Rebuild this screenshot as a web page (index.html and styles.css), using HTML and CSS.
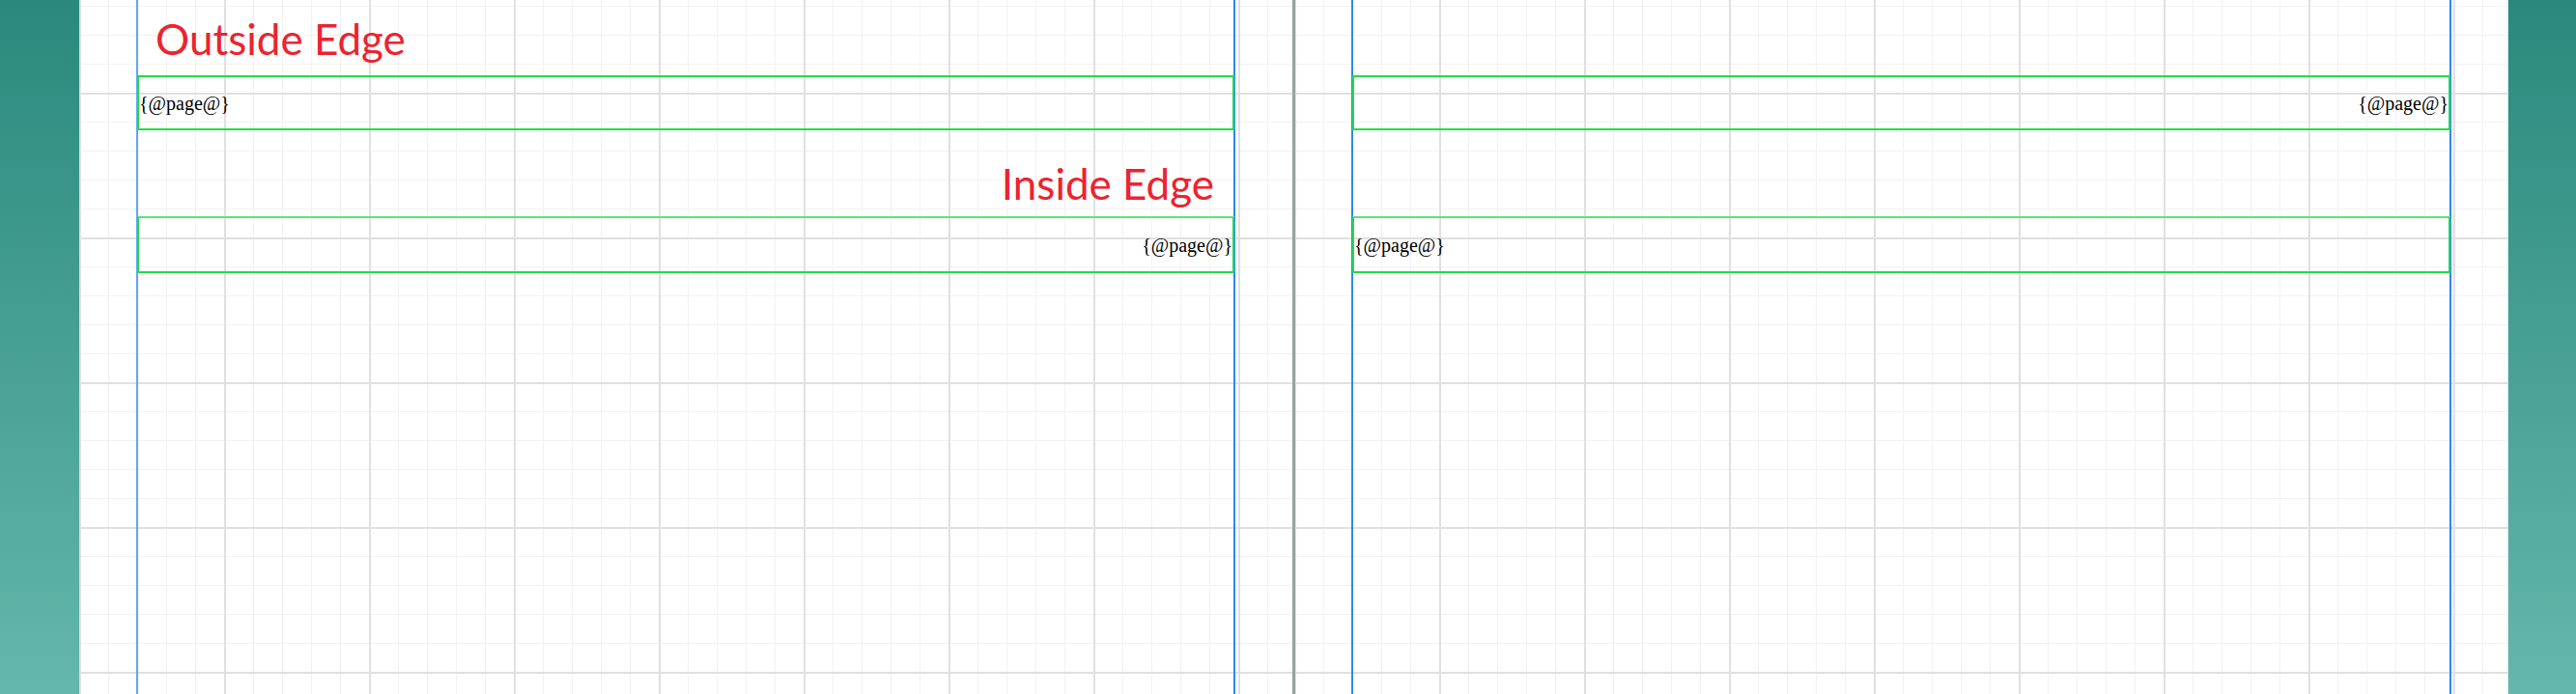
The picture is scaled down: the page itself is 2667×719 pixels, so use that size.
FILE: index.html
```html
<!DOCTYPE html>
<html lang="en">
<head>
  <meta charset="UTF-8" />
  <meta name="viewport" content="width=device-width, initial-scale=1.0"/>
  <title>Page Spread</title>
  <link rel="stylesheet" href="styles.css">
</head>
<body>
  <div class="workspace">
    <!-- left side band -->
    <div class="band band-left"></div>

    <!-- left page (even) -->
    <div class="page page-left">
      <div class="margins">
        <h1 class="label label-outside">Outside Edge</h1>
        <div class="frame frame-start"><span class="folio">{@page@}</span></div>
        <h1 class="label label-inside">Inside Edge</h1>
        <div class="frame frame-end frame-lower"><span class="folio">{@page@}</span></div>
      </div>
    </div>

    <div class="spine"></div>

    <!-- right page (odd) -->
    <div class="page page-right">
      <div class="margins">
        <div class="spacer-top"></div>
        <div class="frame frame-end"><span class="folio">{@page@}</span></div>
        <div class="spacer-mid"></div>
        <div class="frame frame-start frame-lower"><span class="folio">{@page@}</span></div>
      </div>
    </div>

    <!-- right side band -->
    <div class="band band-right"></div>
  </div>
</body>
</html>
```

FILE: styles.css
```css
html, body {
  margin: 0;
  padding: 0;
  height: 100%;
  overflow: hidden;
}

body {
  font-family: 'Liberation Serif', serif;
  background-color: #fff;
}

.workspace {
  display: flex;
  height: 719px;
}

.band {
  background: linear-gradient(to bottom, #2a897c, #64b7ac);
}

.band-left {
  width: 82px;
}

.band-right {
  width: 71px;
  border-left: 1px solid #d9e8e5;
  box-sizing: border-box;
}

.page {
  background-color: #fff;
  background-image:
    linear-gradient(to right, #e0e0e0 2px, transparent 2px),
    linear-gradient(to bottom, #e0e0e0 2px, transparent 2px),
    linear-gradient(to right, #f2f2f2 1px, transparent 1px),
    linear-gradient(to bottom, #f2f2f2 1px, transparent 1px);
  background-size: 150px 150px, 150px 150px, 30px 30px, 30px 30px;
  background-position: 0 96px, 0 96px, 0 96px, 0 96px;
}

.page-left {
  width: 1256px;
}

.page-right {
  width: 1255px;
  background-position: -1px 96px, -1px 96px, -1px 96px, -1px 96px;
}

.spine {
  width: 3px;
  background-color: #98a3a0;
}

.margins {
  height: 100%;
  display: flex;
  flex-direction: column;
  border-left: 2px solid #5ea6f2;
  border-right: 2px solid #2a8af4;
}

.page-left .margins {
  margin: 0 59px;
}

.page-right .margins {
  margin: 0 58px;
  border-left-color: #2a8af4;
}

.label {
  margin: 0;
  font-family: Lato, 'Liberation Sans', sans-serif;
  font-weight: normal;
  font-size: 44px;
  color: #ec2330;
}

.label-outside {
  height: 78px;
  box-sizing: border-box;
  padding: 2px 0 0 18px;
  line-height: 76px;
}

.label-inside {
  height: 89px;
  box-sizing: border-box;
  padding: 21px 20px 0 0;
  line-height: 68px;
  text-align: right;
}

.spacer-top {
  height: 78px;
}

.spacer-mid {
  height: 89px;
}

.frame {
  height: 57px;
  box-sizing: border-box;
  margin: 0 -1px;
  border: 2px solid #22dc46;
  display: flex;
  align-items: center;
}

.frame-lower {
  height: 59px;
  border-top-color: #5be37a;
}

.frame-start {
  justify-content: flex-start;
}

.frame-end {
  justify-content: flex-end;
}

.folio {
  font-size: 20px;
  color: #000;
  line-height: 1;
}
```
